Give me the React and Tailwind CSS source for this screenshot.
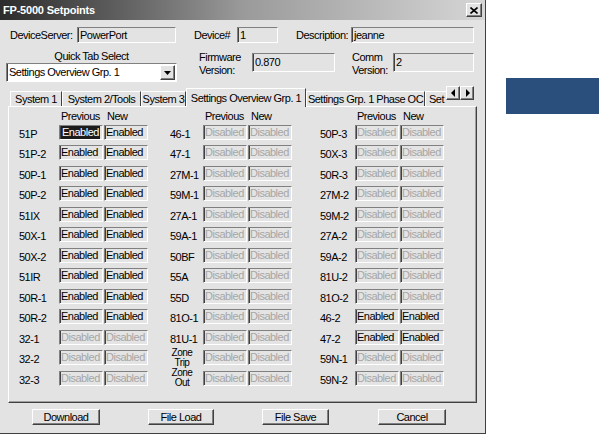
import React from 'react';

const raised =
  'border border-t-white border-l-white border-r-[#404040] border-b-[#404040] shadow-[inset_-1px_-1px_0_#808080]';
const sunken =
  'border border-t-[#808080] border-l-[#808080] border-r-white border-b-white shadow-[inset_1px_0_0_#404040]';

const groups = [
  {
    labelW: 'w-[41px]',
    ml: 'ml-0',
    rows: [
      ['51P', 'sel', 'on'],
      ['51P-2', 'on', 'on'],
      ['50P-1', 'on', 'on'],
      ['50P-2', 'on', 'on'],
      ['51IX', 'on', 'on'],
      ['50X-1', 'on', 'on'],
      ['50X-2', 'on', 'on'],
      ['51IR', 'on', 'on'],
      ['50R-1', 'on', 'on'],
      ['50R-2', 'on', 'on'],
      ['32-1', 'off', 'off'],
      ['32-2', 'off', 'off'],
      ['32-3', 'off', 'off'],
    ],
  },
  {
    labelW: 'w-[34px]',
    ml: 'ml-[20px]',
    rows: [
      ['46-1', 'off', 'off'],
      ['47-1', 'off', 'off'],
      ['27M-1', 'off', 'off'],
      ['59M-1', 'off', 'off'],
      ['27A-1', 'off', 'off'],
      ['59A-1', 'off', 'off'],
      ['50BF', 'off', 'off'],
      ['55A', 'off', 'off'],
      ['55D', 'off', 'off'],
      ['81O-1', 'off', 'off'],
      ['81U-1', 'off', 'off'],
      ['Zone|Trip', 'off', 'off'],
      ['Zone|Out', 'off', 'off'],
    ],
  },
  {
    labelW: 'w-[36px]',
    ml: 'ml-[26px]',
    rows: [
      ['50P-3', 'off', 'off'],
      ['50X-3', 'off', 'off'],
      ['50R-3', 'off', 'off'],
      ['27M-2', 'off', 'off'],
      ['59M-2', 'off', 'off'],
      ['27A-2', 'off', 'off'],
      ['59A-2', 'off', 'off'],
      ['81U-2', 'off', 'off'],
      ['81O-2', 'off', 'off'],
      ['46-2', 'on', 'on'],
      ['47-2', 'on', 'on'],
      ['59N-1', 'off', 'off'],
      ['59N-2', 'off', 'off'],
    ],
  },
];

function StateBox({ state }) {
  return (
    <div className={`w-[44px] h-[15px] flex items-center pl-[1px] bg-[#e4e4e4] leading-none ${sunken}`}>
      {state === 'sel' && <span className="bg-[#1c1c1c] text-white px-[1px] py-[1px]">Enabled</span>}
      {state === 'on' && <span className="text-black">Enabled</span>}
      {state === 'off' && <span className="text-[#a6a6a6]">Disabled</span>}
    </div>
  );
}

function Group({ g }) {
  return (
    <div className={`flex flex-col ${g.ml}`}>
      <div className="flex h-[11px] leading-[11px]">
        <span className={g.labelW}></span>
        <span className="w-[45px] pl-[2px]">Previous</span>
        <span className="w-[45px] pl-[3px]">New</span>
      </div>
      {g.rows.map(([label, prev, next]) => (
        <div key={label} className="flex items-center h-[20.5px]">
          {label.includes('|') ? (
            <span className={`${g.labelW} flex flex-col items-center pr-[8px] leading-[10px] text-[10px]`}>
              {label.split('|').map((t) => (
                <span key={t}>{t}</span>
              ))}
            </span>
          ) : (
            <span className={`${g.labelW} pt-[3px] pl-[1px]`}>{label}</span>
          )}
          <StateBox state={prev} />
          <div className="w-[1px]" />
          <StateBox state={next} />
        </div>
      ))}
    </div>
  );
}

function Tab({ w, children }) {
  return (
    <div
      className={`${w} h-[15px] flex items-center justify-center border-t border-l border-r border-t-white border-l-white border-r-[#404040] whitespace-nowrap overflow-hidden`}
    >
      {children}
    </div>
  );
}

function Arrow({ dir }) {
  return (
    <div className={`w-[14px] h-[14px] flex items-center justify-center bg-[#e3e3e3] ${raised}`}>
      <svg width="5" height="8" viewBox="0 0 5 8">
        {dir === 'left' ? <path d="M4 0 L0 4 L4 8 Z" fill="#000" /> : <path d="M1 0 L5 4 L1 8 Z" fill="#000" />}
      </svg>
    </div>
  );
}

function Button({ w, ml, children }) {
  return (
    <div className={`${w} ${ml} h-[16px] flex items-center justify-center bg-[#e3e3e3] ${raised}`}>{children}</div>
  );
}

export default function App() {
  return (
    <div className="w-[599px] h-[436px] bg-white flex items-start font-['Liberation_Sans',Arial,sans-serif] text-[11px] tracking-[-0.5px] text-black overflow-hidden">
      <div className="w-[486px] h-[434px] flex flex-col bg-[#e3e3e3] border-r border-b border-[#404040]">
        {/* title bar */}
        <div className="h-[20px] flex items-center justify-between pl-[3px] pr-[3px] bg-linear-to-r from-[#2c2c2c] via-[#9a9a9a] to-[#d6d6d6]">
          <span className="text-white font-bold text-[11px] tracking-[-0.2px]">FP-5000 Setpoints</span>
          <div className={`w-[16px] h-[14px] flex items-center justify-center bg-[#e3e3e3] ${raised}`}>
            <svg width="8" height="7" viewBox="0 0 8 7">
              <path d="M0.5 0.5 L7.5 6.5 M7.5 0.5 L0.5 6.5" stroke="#000" strokeWidth="1.6" />
            </svg>
          </div>
        </div>

        {/* device row */}
        <div className="mt-[7px] h-[16px] flex items-center">
          <span className="ml-[10px] w-[67px]">DeviceServer:</span>
          <div className={`w-[99px] h-[16px] flex items-center pl-[2px] ${sunken}`}>PowerPort</div>
          <span className="ml-[18px] w-[43px]">Device#</span>
          <div className={`w-[41px] h-[16px] flex items-center pl-[2px] ${sunken}`}>1</div>
          <span className="ml-[18px] w-[55px]">Description:</span>
          <div className={`w-[123px] h-[16px] flex items-center pl-[2px] ${sunken}`}>jeanne</div>
        </div>

        {/* quick tab / versions */}
        <div className="mt-[7px] h-[32px] flex items-start">
          <div className="ml-[6px] w-[171px] flex flex-col">
            <span className="h-[13px] leading-[13px] text-center">Quick Tab Select</span>
            <div className={`h-[19px] flex items-center justify-between bg-white pl-[2px] pr-[1px] ${sunken}`}>
              <span>Settings Overview Grp. 1</span>
              <div className={`w-[15px] h-[15px] flex items-center justify-center bg-[#e3e3e3] ${raised}`}>
                <svg width="7" height="4" viewBox="0 0 7 4">
                  <path d="M0 0 L7 0 L3.5 4 Z" fill="#000" />
                </svg>
              </div>
            </div>
          </div>
          <div className="ml-[22px] w-[53px] mt-[1px] flex flex-col leading-[13px]">
            <span>Firmware</span>
            <span>Version:</span>
          </div>
          <div className={`mt-[3px] w-[83px] h-[19px] flex items-center pl-[2px] ${sunken}`}>0.870</div>
          <div className="ml-[17px] w-[41px] mt-[1px] flex flex-col leading-[13px]">
            <span>Comm</span>
            <span>Version:</span>
          </div>
          <div className={`mt-[3px] w-[81px] h-[19px] flex items-center pl-[2px] ${sunken}`}>2</div>
        </div>

        {/* tab strip */}
        <div className="mt-[4px] h-[20px] ml-[10px] flex items-end">
          <Tab w="w-[52px]">System 1</Tab>
          <Tab w="w-[79px]">System 2/Tools</Tab>
          <Tab w="w-[45px]">System 3</Tab>
          <div className="w-[120px] h-[19px] -mb-[1px] relative z-10 flex items-start justify-center pt-[1px] bg-[#e3e3e3] border-t border-l border-r border-t-white border-l-white border-r-[#404040] whitespace-nowrap">
            Settings Overview Grp. 1
          </div>
          <Tab w="w-[119px]">Settings Grp. 1 Phase OC</Tab>
          <div className="w-[21px] h-[15px] flex items-center pl-[3px] border-t border-l border-t-white border-l-white whitespace-nowrap">
            Set
          </div>
          <div className="self-start flex">
            <Arrow dir="left" />
            <Arrow dir="right" />
          </div>
        </div>

        {/* tab panel */}
        <div className="ml-[8px] w-[469px] h-[297px] border border-t-white border-l-white border-r-[#404040] border-b-[#404040] shadow-[inset_-1px_-1px_0_#a0a0a0] pt-[4px] pl-[9px] flex">
          {groups.map((g, i) => (
            <Group key={i} g={g} />
          ))}
        </div>

        {/* buttons */}
        <div className="mt-[6px] flex">
          <Button w="w-[68px]" ml="ml-[32px]">Download</Button>
          <Button w="w-[66px]" ml="ml-[48px]">File Load</Button>
          <Button w="w-[67px]" ml="ml-[48px]">File Save</Button>
          <Button w="w-[68px]" ml="ml-[49px]">Cancel</Button>
        </div>
      </div>

      <div className="ml-[20px] mt-[78px] w-[93px] h-[36px] bg-[#2b4f7c]" />
    </div>
  );
}
